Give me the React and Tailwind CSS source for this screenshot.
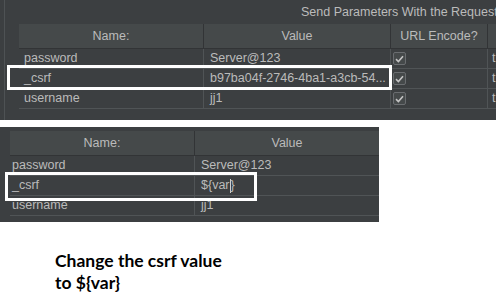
import React from 'react';

// ─── Données ──────────────────────────────────────────────────────────────────
const topRows = [
  { name: 'password', value: 'Server@123' },
  { name: '_csrf', value: 'b97ba04f-2746-4ba1-a3cb-54...' },
  { name: 'username', value: 'jj1' },
];

const bottomRows = [
  { name: 'password', value: 'Server@123' },
  { name: '_csrf', value: '${var}', caret: true },
  { name: 'username', value: 'jj1' },
];

const Check = () => (
  <div className="w-[13px] h-[13px] rounded-[2px] border border-[#6a6d70] bg-[#45494a] flex items-center justify-center">
    <svg width="9" height="8" viewBox="0 0 9 8">
      <path d="M1 4.2 L3.4 6.5 L8 1.2" fill="none" stroke="#c4c4c4" strokeWidth="1.6" />
    </svg>
  </div>
);

const font = "font-['Liberation_Sans',Arial,sans-serif] text-[12.5px] text-[#bbbbbb]";

export default function App() {
  return (
    <div className="w-[496px] h-[304px] bg-white overflow-hidden relative">

      {/* ── Panneau du haut ── */}
      <div className={`h-[120px] bg-[#3c3f41] flex ${font}`}>
        <div className="ml-[4px] w-px bg-[#4e5254]" />
        <div className="flex-1 pl-[14px] flex flex-col min-w-0">
          <div className="h-[24px] flex items-center pl-[282px] whitespace-nowrap">
            Send Parameters With the Request
          </div>
          <div className="flex h-[25px] bg-[#45494a] border-b border-[#323436] whitespace-nowrap">
            <div className="w-[185px] border-r border-[#323436] flex items-center justify-center">Name:</div>
            <div className="w-[187px] border-r border-[#323436] flex items-center justify-center">Value</div>
            <div className="w-[97px] border-r border-[#323436] flex items-center justify-center">URL Encode?</div>
            <div className="flex-1" />
          </div>
          {topRows.map(r => (
            <div key={r.name} className="flex h-[20px] border-b border-[#505456] whitespace-nowrap">
              <div className="w-[185px] border-r border-[#505456] pl-[5px] flex items-center">{r.name}</div>
              <div className="w-[187px] border-r border-[#505456] pl-[6px] flex items-center">{r.value}</div>
              <div className="w-[97px] border-r border-[#505456] pl-[2px] flex items-center"><Check /></div>
              <div className="flex-1 pl-[4px] flex items-center overflow-hidden">t</div>
            </div>
          ))}
        </div>
      </div>

      {/* ── Panneau du bas ── */}
      <div className={`mt-[7px] w-[379px] h-[95px] bg-[#3c3f41] pl-[10px] pt-[4px] ${font}`}>
        <div className="flex h-[25px] bg-[#45494a] border-b border-[#323436] whitespace-nowrap">
          <div className="w-[185px] border-r border-[#323436] flex items-center justify-center">Name:</div>
          <div className="flex-1 flex items-center justify-center">Value</div>
        </div>
        {bottomRows.map(r => (
          <div key={r.name} className="flex h-[20px] border-b border-[#505456] whitespace-nowrap">
            <div className="w-[185px] border-r border-[#505456] pl-[2px] flex items-center">{r.name}</div>
            <div className="flex-1 pl-[6px] flex items-center">
              {r.caret ? (<>{'${var'}<span className="w-px h-[14px] bg-[#d0d0d0]" />{'}'}</>) : r.value}
            </div>
          </div>
        ))}
      </div>

      {/* ── Texte ── */}
      <div className="pl-[55px] pt-[28px] font-['Lato',sans-serif] font-bold text-[17.5px] leading-[22px] text-black">
        <p>Change the csrf value</p>
        <p>to ${'{var}'}</p>
      </div>

      {/* ── Cadres blancs ── */}
      <div className="absolute left-[7px] top-[65px] w-[385px] h-[25px] border-[3px] border-white" />
      <div className="absolute left-[5px] top-[172px] w-[252px] h-[29px] border-[3px] border-white" />
    </div>
  );
}
